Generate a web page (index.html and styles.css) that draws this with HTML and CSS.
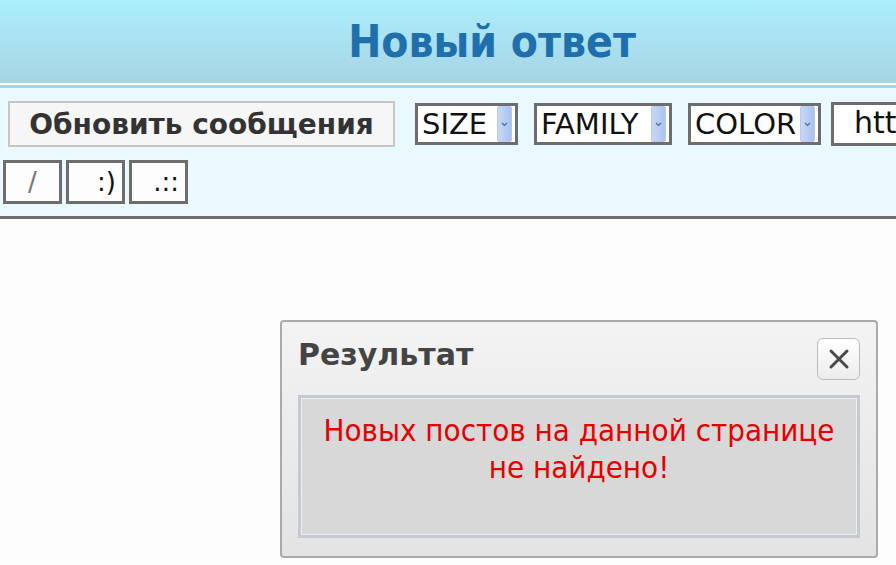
FILE: index.html
```html
<!DOCTYPE html>
<html lang="ru">
<head>
    <meta charset="UTF-8">
    <title>Новый ответ</title>
    <link rel="stylesheet" href="styles.css">
</head>
<body>
    <header class="topo">
        <h1>Новый ответ</h1>
    </header>
    <div class="toolbar">
        <div class="row">
            <button class="refresh">Обновить сообщения</button>
            <div class="select sel-size"><span>SIZE</span><i class="arrow"><svg width="7" height="5" viewBox="0 0 7 5"><path d="M1 1 L3.5 3.5 L6 1" fill="none" stroke="#4a6a9a" stroke-width="1.2"/></svg></i></div>
            <div class="select sel-family"><span>FAMILY</span><i class="arrow"><svg width="7" height="5" viewBox="0 0 7 5"><path d="M1 1 L3.5 3.5 L6 1" fill="none" stroke="#4a6a9a" stroke-width="1.2"/></svg></i></div>
            <div class="select sel-color"><span>COLOR</span><i class="arrow"><svg width="7" height="5" viewBox="0 0 7 5"><path d="M1 1 L3.5 3.5 L6 1" fill="none" stroke="#4a6a9a" stroke-width="1.2"/></svg></i></div>
            <div class="link-input">htt</div>
        </div>
        <div class="row small">
            <button class="tag slash">/</button>
            <button class="tag">:)</button>
            <button class="tag">.::</button>
        </div>
    </div>
    <main class="content"></main>

    <div class="dialog">
        <div class="dialog-head">
            <h2>Результат</h2>
            <button class="close"><svg width="26" height="26" viewBox="0 0 26 26"><path d="M5 5 L21 21 M21 5 L5 21" stroke="#4a4a4a" stroke-width="3" stroke-linecap="round"/></svg></button>
        </div>
        <div class="dialog-body">
            <p>Новых постов на данной странице не найдено!</p>
        </div>
    </div>
</body>
</html>
```
FILE: styles.css
```css
/* base */
body {
    margin: 0;
    background: #fdfdfd;
    font-family: "DejaVu Sans", Verdana, sans-serif;
    height: 565px;
    overflow: hidden;
}
.topo {
    height: 83px;
    background: linear-gradient(to bottom, #abeefd, #a7d4e4);
    border-bottom: 2px solid #ffffff;
    box-shadow: 0 3px 0 #a8d4e4;
    margin-bottom: 3px;
    display: flex;
    align-items: center;
    justify-content: center;
    padding-left: 88px;
}
.topo h1 {
    margin: 0;
    font-family: "DejaVu Sans Condensed", "DejaVu Sans", sans-serif;
    font-weight: bold;
    font-size: 44px;
    color: #1e6fab;
}
.toolbar {
    background: #e9f9fe;
    border-bottom: 3px solid #6d6d6d;
    padding: 13px 0 12px 0;
}
.row {
    display: flex;
    align-items: center;
    white-space: nowrap;
    overflow: hidden;
    padding-left: 8px;
}
.row.small {
    padding-left: 3px;
    margin-top: 13px;
    gap: 4px;
}
.refresh {
    flex-shrink: 0;
    width: 387px;
    height: 46px;
    border: 2px solid #c6c6c6;
    background: #f6f6f6;
    font-family: "DejaVu Sans", sans-serif;
    font-weight: bold;
    font-size: 28px;
    color: #333;
    padding: 0;
    margin-right: 20px;
}
.select {
    height: 42px;
    box-sizing: border-box;
    border: 3px solid #6d6d6d;
    background: #fff;
    display: flex;
    align-items: center;
    justify-content: space-between;
    padding: 0 3px 0 4px;
    font-size: 29px;
    color: #111;
    margin-right: 16px;
    flex-shrink: 0;
}
.sel-size { width: 103px; }
.sel-family { width: 138px; }
.sel-color { width: 133px; margin-right: 10px; }
.arrow {
    width: 13px;
    height: 34px;
    flex-shrink: 0;
    background: linear-gradient(to right, #c6d8f6, #a9c3ef);
    border: 1px solid #b7c9e6;
    border-radius: 2px;
    display: flex;
    align-items: center;
    justify-content: center;
}
.link-input {
    height: 44px;
    box-sizing: border-box;
    width: 120px;
    flex-shrink: 0;
    border: 3px solid #6d6d6d;
    background: #fff;
    font-size: 30px;
    color: #111;
    padding-left: 20px;
    line-height: 36px;
}
.tag {
    width: 59px;
    height: 44px;
    border: 3px solid #6d6d6d;
    background: #fdfdfd;
    font-family: "DejaVu Sans", sans-serif;
    font-size: 26px;
    color: #111;
    text-align: right;
    padding: 0 6px 0 0;
}
.tag.slash {
    text-align: center;
    color: #777;
    padding: 0;
}
.content {
    height: 300px;
}

/* dialog */
.dialog {
    position: absolute;
    left: 280px;
    top: 320px;
    width: 598px;
    height: 238px;
    box-sizing: border-box;
    border: 2px solid #aaaaaa;
    border-radius: 4px;
    background: linear-gradient(to bottom, #f3f3f3, #e3e3e3);
    padding: 0 16px 0 16px;
}
.dialog-head {
    display: flex;
    align-items: center;
    justify-content: space-between;
    height: 73px;
}
.dialog-head h2 {
    margin: 0 0 8px 0;
    font-family: "DejaVu Sans", sans-serif;
    font-weight: bold;
    font-size: 30px;
    color: #444;
}
.close {
    width: 43px;
    height: 42px;
    border: 1px solid #bdbdbd;
    border-radius: 6px;
    background: linear-gradient(to bottom, #ffffff, #ececec);
    display: flex;
    align-items: center;
    justify-content: center;
    padding: 0;
}
.dialog-body {
    height: 143px;
    box-sizing: border-box;
    border: 3px solid #c4cacf;
    box-shadow: inset 0 0 0 1px #eeeeee;
    background: #d8d8d8;
    text-align: center;
    padding-top: 14px;
}
.dialog-body p {
    margin: 0 auto;
    width: 530px;
    font-family: "DejaVu Sans Condensed", "DejaVu Sans", sans-serif;
    font-size: 31px;
    line-height: 37px;
    color: #e60000;
}
```
